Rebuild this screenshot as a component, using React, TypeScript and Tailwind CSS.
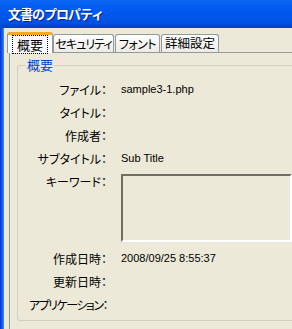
import React from "react";

const rows: { label: string; value?: string; h: number; box?: boolean; t?: string }[] = [
  { label: "ファイル：", value: "sample3-1.php", h: 23 },
  { label: "タイトル：", h: 23 },
  { label: "作成者：", h: 23 },
  { label: "サブタイトル：", value: "Sub Title", h: 23 },
  { label: "キーワード：", h: 77, box: true },
  { label: "作成日時：", value: "2008/09/25 8:55:37", h: 23 },
  { label: "更新日時：", h: 23 },
  { label: "アプリケーション：", h: 23, t: "tracking-[-1.5px]" },
];

export default function App() {
  return (
    <div className="w-[292px] h-[329px] overflow-hidden bg-[#ECE9D8] flex flex-col font-['Noto_Sans_CJK_JP',sans-serif] [font-feature-settings:'palt'] text-black">
      <div className="h-[28px] shrink-0 bg-[linear-gradient(to_bottom,#0A66F2_0%,#0058EE_40%,#0052E4_80%,#0040C8_100%)] flex items-center pl-[8px] pb-[2px] text-white font-bold text-[13px] leading-none tracking-[-1px] [font-feature-settings:normal] [text-shadow:1px_1px_0_#0A1E8C]">
        文書のプロパティ
      </div>
      <div className="flex flex-1">
        <div className="w-[4px] shrink-0 bg-[linear-gradient(to_right,#0831D9,#166AEE_70%,#5A8FF0)]" />
        <div className="flex-1 flex flex-col pl-[3px] pt-[4px]">
          <div className="flex items-end h-[20px] text-[12px] leading-none whitespace-nowrap">
            <div className="relative z-10 -mb-px h-[21px] w-[46px] bg-[#FCFCFE] border-x border-[#919B9C] border-t-[3px] border-t-[#F5A623] rounded-t-[3px] flex items-center justify-center">
              <span className="border border-dotted border-black px-[4px] py-[2px] text-[13px]">概要</span>
            </div>
            <div className="h-[18px] w-[61px] border border-b-0 border-[#919B9C] rounded-t-[3px] bg-[linear-gradient(to_bottom,#FFFFFF,#ECEBE6)] flex items-center justify-center tracking-[-1px]">
              セキュリティ
            </div>
            <div className="h-[18px] w-[45px] ml-px border border-b-0 border-[#919B9C] rounded-t-[3px] bg-[linear-gradient(to_bottom,#FFFFFF,#ECEBE6)] flex items-center justify-center tracking-[-0.5px]">
              フォント
            </div>
            <div className="h-[18px] w-[58px] ml-px border border-b-0 border-[#919B9C] rounded-t-[3px] bg-[linear-gradient(to_bottom,#FFFFFF,#ECEBE6)] flex items-center justify-center text-[12.5px]">
              詳細設定
            </div>
          </div>
          <div className="ml-[2px] flex-1 border-t border-l border-[#919B9C] pl-[7px] pt-[12px]">
            <div className="relative h-[256px] border border-r-0 border-[#D0D0BF] rounded-l-[3px] pt-[12px]">
              <span className="absolute -top-[8px] left-[8px] px-[1px] bg-[#ECE9D8] text-[#0046D5] text-[13px] leading-[14px]">
                概要
              </span>
              <div className="flex flex-col">
                {rows.map((r) => (
                  <div key={r.label} className="flex" style={{ height: r.h }}>
                    <div className={`w-[89px] shrink-0 h-[23px] flex items-center justify-end text-[12px] leading-none whitespace-nowrap ${r.t ?? ""}`}>
                      {r.label}
                    </div>
                    <div className="ml-[14px] flex-1">
                      {r.box ? (
                        <div className="mt-[4px] h-[68px] border-2 border-t-[#716F64] border-l-[#716F64] border-b-white border-r-white bg-[#ECE9D8]" />
                      ) : (
                        <div className="h-[23px] flex items-center font-['Liberation_Sans',sans-serif] text-[11px] leading-none">
                          {r.value ?? ""}
                        </div>
                      )}
                    </div>
                  </div>
                ))}
              </div>
            </div>
          </div>
        </div>
      </div>
    </div>
  );
}
